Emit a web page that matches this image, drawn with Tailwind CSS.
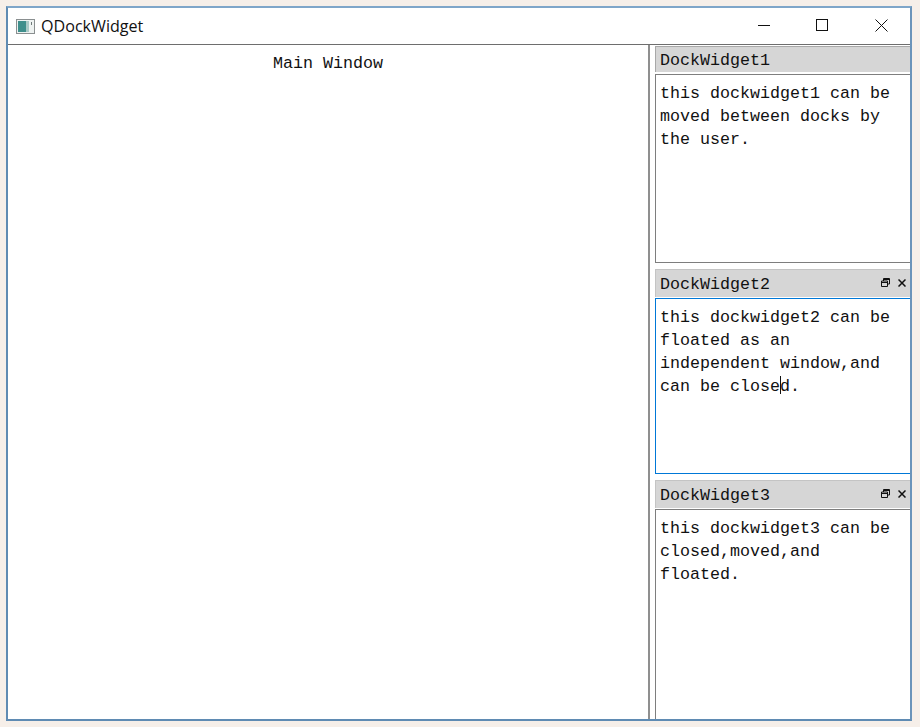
<!DOCTYPE html>
<html lang="en">

<head>
    <meta charset="UTF-8">
    <title>QDockWidget</title>
    <script src="https://cdn.jsdelivr.net/npm/@tailwindcss/browser@4"></script>
</head>

<body class="w-[920px] h-[727px] overflow-hidden bg-[#f6efe9] pt-[6px] pl-[6px]">
    <!-- Window -->
    <div class="w-[906px] h-[715px] flex flex-col bg-white border-2 border-[#5f8bb3] border-t-[#7fa6c9] border-r-[#6b94ba]">
        <!-- Title bar -->
        <div class="h-[37px] shrink-0 flex items-center border-b border-[#6e6e6e]">
            <svg class="ml-[8px] w-[19px] h-[15px]" viewBox="0 0 19 15">
                <rect x="0.5" y="0.5" width="18" height="14" fill="#eef2f1" stroke="#8a8f90" />
                <rect x="2" y="2" width="8" height="11" fill="#3f8f8c" />
                <rect x="10" y="2" width="3" height="11" fill="#a9c9c6" />
                <rect x="15" y="3" width="1" height="3" fill="#6f7a7a" />
            </svg>
            <span class="ml-[6px] font-['Open_Sans',sans-serif] text-[16.1px] text-[#111]">QDockWidget</span>
            <div class="ml-auto flex items-center gap-[46px] mr-[22px] mb-[2px]">
                <svg class="w-[12px] h-[12px]" viewBox="0 0 12 12"><path d="M0 6.5H12" stroke="#111" /></svg>
                <svg class="w-[12px] h-[12px]" viewBox="0 0 12 12"><rect x="0.5" y="0.5" width="11" height="11" fill="none" stroke="#111" /></svg>
                <svg class="ml-px w-[13px] h-[13px]" viewBox="0 0 13 13"><path d="M0.5 0.5L12.5 12.5M12.5 0.5L0.5 12.5" stroke="#111" /></svg>
            </div>
        </div>

        <!-- Body -->
        <div class="flex-1 min-h-0 flex font-['Liberation_Mono',monospace] text-[16.67px] leading-[23px] text-[#111]">
            <!-- Central widget -->
            <div class="w-[642px] shrink-0 border-r-2 border-[#8f8f8f] text-center pt-[7px]">Main Window</div>

            <!-- Docks -->
            <div class="flex-1 min-w-0 flex flex-col pl-[5px] pt-[1px]">
                <div class="h-[26px] shrink-0 bg-[#d6d6d6] border border-b-0 border-[#a8a8a8] border-r-0 flex items-center pl-[4px] pt-[2px]">DockWidget1</div>
                <div class="h-[189px] mt-[2px] shrink-0 border border-r-0 border-[#7e7e7e] pl-[4px] pt-[7px]">this dockwidget1 can be<br>moved between docks by<br>the user.</div>

                <div class="h-[28px] mt-[6px] shrink-0 bg-[#d6d6d6] border border-b-0 border-r-0 border-[#c4c4c4] flex items-center pl-[4px] pt-px">
                    DockWidget2
                    <svg class="ml-auto mb-[3px] w-[9px] h-[9px]" viewBox="0 0 9 9"><path d="M2.5 .5H8.5V6H6.5M2.5 .5V3M2.5 1.5H8.5M.5 3H6.5V8.5H.5ZM.5 4.5H6.5" fill="none" stroke="#111" /></svg>
                    <svg class="ml-[8px] mr-[4px] mb-[3px] w-[8px] h-[8px]" viewBox="0 0 8 8"><path d="M.5 .5L7.5 7.5M7.5 .5L.5 7.5" stroke="#111" stroke-width="1.5" /></svg>
                </div>
                <div class="relative h-[176px] mt-[1px] shrink-0 border border-r-0 border-[#0078d7] pl-[4px] pt-[7px]">this dockwidget2 can be<br>floated as an<br>independent window,and<br>can be closed.
                    <div class="absolute left-[124px] top-[77px] w-px h-[18px] bg-[#111]"></div>
                </div>

                <div class="h-[28px] mt-[6px] shrink-0 bg-[#d6d6d6] border border-b-0 border-r-0 border-[#c4c4c4] flex items-center pl-[4px] pt-px">
                    DockWidget3
                    <svg class="ml-auto mb-[3px] w-[9px] h-[9px]" viewBox="0 0 9 9"><path d="M2.5 .5H8.5V6H6.5M2.5 .5V3M2.5 1.5H8.5M.5 3H6.5V8.5H.5ZM.5 4.5H6.5" fill="none" stroke="#111" /></svg>
                    <svg class="ml-[8px] mr-[4px] mb-[3px] w-[8px] h-[8px]" viewBox="0 0 8 8"><path d="M.5 .5L7.5 7.5M7.5 .5L.5 7.5" stroke="#111" stroke-width="1.5" /></svg>
                </div>
                <div class="flex-1 min-h-0 mt-[1px] border-t border-l border-[#7e7e7e] pl-[4px] pt-[7px]">this dockwidget3 can be<br>closed,moved,and<br>floated.</div>
            </div>
        </div>
    </div>
</body>

</html>
